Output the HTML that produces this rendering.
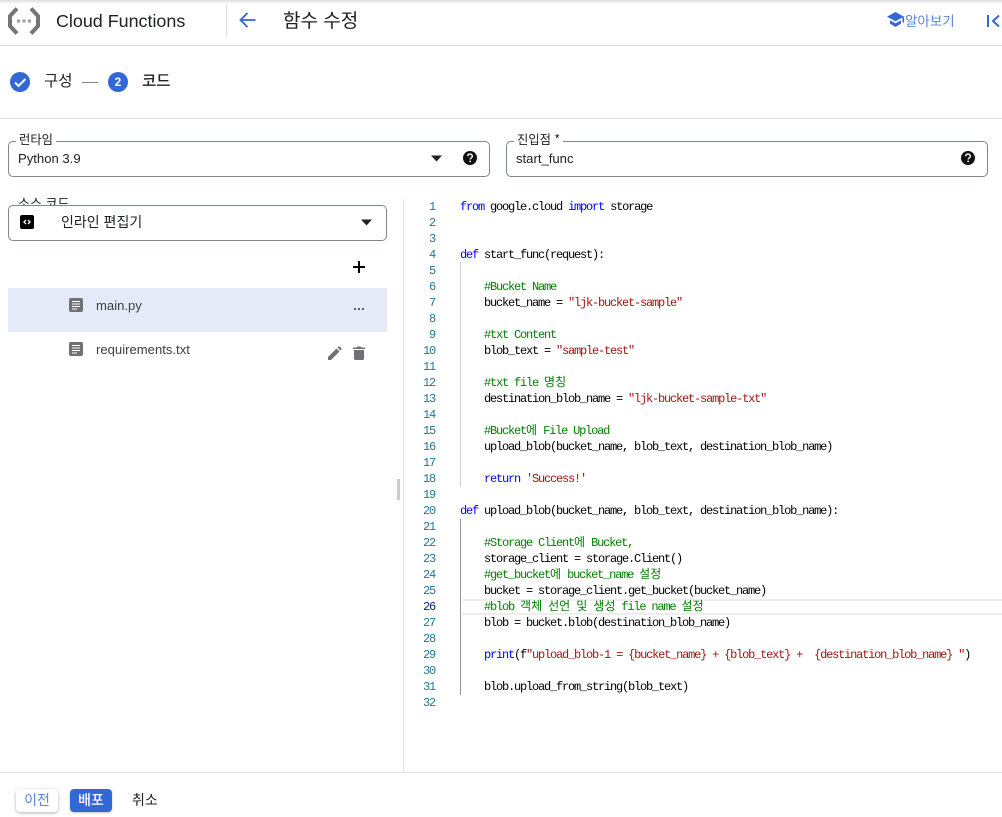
<!DOCTYPE html>
<html lang="ko"><head><meta charset="utf-8"><title>함수 수정</title>
<style>
html,body{margin:0;padding:0;background:#fff}
body{width:1002px;height:817px;position:relative;overflow:hidden;font-family:"Liberation Sans","Noto Sans CJK KR",sans-serif;color:#202124}
.a{position:absolute;white-space:nowrap}
svg{position:absolute;display:block}
.box{position:absolute;box-sizing:border-box;border:1px solid #80868b;border-radius:5px;background:#fff}
.lab{position:absolute;background:#fff;padding:0 3px;font-size:12.300px;line-height:14px;white-space:nowrap;color:#202124}
.val{position:absolute;font-size:13.100px;line-height:16px;white-space:nowrap;color:#202124}
.ko{font-family:"Noto Sans CJK KR","Liberation Sans",sans-serif}
#nums div{position:absolute;left:404px;width:31px;height:16px;line-height:16px;text-align:right;font:12px/16px "Liberation Mono",monospace;letter-spacing:-1.2px;color:#237893}
#code pre{position:absolute;left:460px;margin:0;height:16px;font:12px/16px "Liberation Mono","Noto Sans CJK KR",monospace;letter-spacing:-1.2px;color:#000;white-space:pre}
#code b{font-weight:normal;color:#00f}
#code s{text-decoration:none;color:#a31515}
#code i{font-style:normal;color:#008000}
#code u{text-decoration:none;font-family:"Noto Sans CJK KR",sans-serif;letter-spacing:0;line-height:0}
</style></head><body>

<div class="a" style="left:0;top:0;width:1002px;height:4px;background:linear-gradient(#dcdcdc,#fff)"></div>
<div class="a" style="left:0;top:45px;width:1002px;height:1px;background:#e0e0e0"></div>
<div class="a" style="left:226px;top:5px;width:1px;height:32px;background:#dadce0"></div>

<svg style="left:8px;top:7px" width="32" height="28" viewBox="0 0 32 28"><path d="M9 1.500 2 9v10l7 7.500" fill="none" stroke="#757575" stroke-width="4"/><path d="M23 1.500 30 9v10l-7 7.500" fill="none" stroke="#757575" stroke-width="4"/><circle cx="10.500" cy="14" r="1.700" fill="#9e9e9e"/><circle cx="16" cy="14" r="1.700" fill="#9e9e9e"/><circle cx="21.500" cy="14" r="1.700" fill="#9e9e9e"/></svg>
<div class="a" style="left:56px;top:10px;font-size:17.900px;line-height:22px;color:#202124">Cloud Functions</div>
<svg style="left:238px;top:11px" width="18" height="18" viewBox="0 0 18 18"><path d="M17.500 9H2.500M9.500 2 2.500 9l7 7" fill="none" stroke="#3367d6" stroke-width="1.800"/></svg>
<div class="a ko" style="left:283px;top:7px;font-size:19px;line-height:26px;color:#202124">함수 수정</div>

<svg style="left:887px;top:12px" width="17" height="15" viewBox="0 0 17 15"><path d="M8.500 0 0 4.700l8.500 4.600 7-3.800v5h1.500V4.700zM3 8.400v3.200L8.500 15l5.500-3.400V8.400l-5.500 3z" fill="#3367d6"/></svg>
<div class="a ko" style="left:905px;top:12px;font-size:13.500px;line-height:17px;color:#5a85e0">알아보기</div>
<svg style="left:986px;top:14px" width="16" height="14" viewBox="0 0 16 14"><rect x="1" y="1" width="2" height="12" fill="#3367d6"/><path d="M13 1.500 7 7l6 5.500" fill="none" stroke="#3367d6" stroke-width="2"/></svg>

<svg style="left:10px;top:72px" width="20" height="20" viewBox="0 0 20 20"><circle cx="10" cy="10" r="10" fill="#3367d6"/><path d="M5 10.500 8.500 14 15.500 7" fill="none" stroke="#fff" stroke-width="2"/></svg>
<div class="a ko" style="left:44px;top:71px;font-size:15.500px;line-height:18px;color:#202124">구성</div>
<div class="a" style="left:82px;top:82px;width:16px;height:1px;background:#80868b"></div>
<div class="a" style="left:108px;top:72px;width:20px;height:20px;border-radius:50%;background:#3367d6;color:#fff;font-size:12px;font-weight:bold;line-height:20px;text-align:center">2</div>
<div class="a ko" style="left:142px;top:71px;font-size:15.500px;line-height:18px;font-weight:500;color:#202124">코드</div>
<div class="a" style="left:0;top:118px;width:1002px;height:1px;background:#e0e0e0"></div>

<div class="box" style="left:8px;top:141px;width:482px;height:36px"></div>
<div class="lab ko" style="left:16px;top:132px">런타임</div>
<div class="val" style="left:18px;top:151px">Python 3.9</div>
<svg style="left:431px;top:155px" width="11" height="7" viewBox="0 0 11 7"><path d="M0 .5h11L5.500 6.500z" fill="#202124"/></svg>
<svg style="left:462px;top:150px" width="16" height="16" viewBox="0 0 16 16"><circle cx="8" cy="8" r="7" fill="#111"/><path d="M5.700 6.200C5.800 4.900 6.800 4.100 8 4.100c1.300 0 2.300.8 2.300 2 0 1.700-2.100 1.800-2.100 3.400" fill="none" stroke="#fff" stroke-width="1.400"/><rect x="7.400" y="10.600" width="1.500" height="1.500" fill="#fff"/></svg>

<div class="box" style="left:506px;top:141px;width:482px;height:36px"></div>
<div class="lab ko" style="left:514px;top:132px">진입점 *</div>
<div class="val" style="left:516px;top:151px">start_func</div>
<svg style="left:960px;top:150px" width="16" height="16" viewBox="0 0 16 16"><circle cx="8" cy="8" r="7" fill="#111"/><path d="M5.700 6.200C5.800 4.900 6.800 4.100 8 4.100c1.300 0 2.300.8 2.300 2 0 1.700-2.100 1.800-2.100 3.400" fill="none" stroke="#fff" stroke-width="1.400"/><rect x="7.400" y="10.600" width="1.500" height="1.500" fill="#fff"/></svg>

<div class="box" style="left:8px;top:205px;width:379px;height:36px"></div>
<div class="lab ko" style="left:15px;top:196px;height:9px;overflow:hidden;font-size:13px">소스 코드</div>
<svg style="left:20px;top:215px" width="14" height="14" viewBox="0 0 14 14"><rect width="14" height="14" rx="2" fill="#000"/><path d="M6 5 4 7l2 2M8 5l2 2-2 2" fill="none" stroke="#fff" stroke-width="1.300"/></svg>
<div class="val ko" style="left:61px;top:214px;font-size:14px">인라인 편집기</div>
<svg style="left:361px;top:219px" width="11" height="7" viewBox="0 0 11 7"><path d="M0 .5h11L5.500 6.500z" fill="#202124"/></svg>

<svg style="left:352px;top:260px" width="14" height="14" viewBox="0 0 14 14"><path d="M7 1v12M1 7h12" stroke="#000" stroke-width="2"/></svg>

<div class="a" style="left:8px;top:288px;width:379px;height:44px;background:#e4eaf8"></div>
<svg style="left:69px;top:298px" width="14" height="14" viewBox="0 0 14 14"><rect width="14" height="14" rx="2" fill="#6f7175"/><path d="M3 3.500h8M3 6h8M3 8.500h8M3 11h5" stroke="#fff" stroke-width="1"/></svg>
<div class="val" style="left:96px;top:298px;color:#3c4043">main.py</div>
<div class="a" style="left:354px;top:308px;width:2px;height:2px;background:#5f6368;box-shadow:4px 0 #5f6368,8px 0 #5f6368"></div>

<svg style="left:69px;top:342px" width="14" height="14" viewBox="0 0 14 14"><rect width="14" height="14" rx="2" fill="#6f7175"/><path d="M3 3.500h8M3 6h8M3 8.500h8M3 11h5" stroke="#fff" stroke-width="1"/></svg>
<div class="val" style="left:96px;top:342px;color:#3c4043">requirements.txt</div>
<svg style="left:328px;top:346px" width="14" height="14" viewBox="0 0 14 14"><path d="M0 11v3h3l8.500-8.500-3-3zM9.500 1.500l3 3L14 3 11 0z" fill="#6f7175"/></svg>
<svg style="left:353px;top:346px" width="12" height="14" viewBox="0 0 12 14"><path d="M1 4h10v8.500A1.500 1.500 0 0 1 9.500 14h-7A1.500 1.500 0 0 1 1 12.500zM0 1.500h3.500L4.500.5h3l1 1H12V3H0z" fill="#6f7175"/></svg>

<div class="a" style="left:397px;top:479px;width:3px;height:21px;background:#ccc"></div>
<div class="a" style="left:403px;top:199px;width:1px;height:573px;background:#e3e3e3"></div>

<div class="a" style="left:462px;top:599px;width:540px;height:16px;box-sizing:border-box;border-top:2px solid #eee;border-bottom:2px solid #eee"></div>
<div class="a" style="left:460px;top:262px;width:1px;height:225px;background:#d3d3d3"></div>
<div class="a" style="left:460px;top:519px;width:1px;height:176px;background:#939393"></div>

<div id="nums">
<div style="top:199px">1</div><div style="top:215px">2</div><div style="top:231px">3</div><div style="top:247px">4</div><div style="top:263px">5</div><div style="top:279px">6</div><div style="top:295px">7</div><div style="top:311px">8</div><div style="top:327px">9</div><div style="top:343px">10</div><div style="top:359px">11</div><div style="top:375px">12</div><div style="top:391px">13</div><div style="top:407px">14</div><div style="top:423px">15</div><div style="top:439px">16</div><div style="top:455px">17</div><div style="top:471px">18</div><div style="top:487px">19</div><div style="top:503px">20</div><div style="top:519px">21</div><div style="top:535px">22</div><div style="top:551px">23</div><div style="top:567px">24</div><div style="top:583px">25</div><div style="top:599px;color:#0b216f">26</div><div style="top:615px">27</div><div style="top:631px">28</div><div style="top:647px">29</div><div style="top:663px">30</div><div style="top:679px">31</div><div style="top:695px">32</div>
</div>

<div id="code">
<pre style="top:199px"><b>from</b> google.cloud <b>import</b> storage</pre>
<pre style="top:247px"><b>def</b> start_func(request):</pre>
<pre style="top:279px">    <i>#Bucket Name</i></pre>
<pre style="top:295px">    bucket_name = <s>"ljk-bucket-sample"</s></pre>
<pre style="top:327px">    <i>#txt Content</i></pre>
<pre style="top:343px">    blob_text = <s>"sample-test"</s></pre>
<pre style="top:375px">    <i>#txt file <u>명칭</u></i></pre>
<pre style="top:391px">    destination_blob_name = <s>"ljk-bucket-sample-txt"</s></pre>
<pre style="top:423px">    <i>#Bucket<u>에</u> File Upload</i></pre>
<pre style="top:439px">    upload_blob(bucket_name, blob_text, destination_blob_name)</pre>
<pre style="top:471px">    <b>return</b> <s>'Success!'</s></pre>
<pre style="top:503px"><b>def</b> upload_blob(bucket_name, blob_text, destination_blob_name):</pre>
<pre style="top:535px">    <i>#Storage Client<u>에</u> Bucket,</i></pre>
<pre style="top:551px">    storage_client = storage.Client()</pre>
<pre style="top:567px">    <i>#get_bucket<u>에</u> bucket_name <u>설정</u></i></pre>
<pre style="top:583px">    bucket = storage_client.get_bucket(bucket_name)</pre>
<pre style="top:599px">    <i>#blob <u>객체</u> <u>선언</u> <u>및</u> <u>생성</u> file name <u>설정</u></i></pre>
<pre style="top:615px">    blob = bucket.blob(destination_blob_name)</pre>
<pre style="top:647px">    <b>print</b>(f<s>"upload_blob-1 = {bucket_name} + {blob_text} +  {destination_blob_name} "</s>)</pre>
<pre style="top:679px">    blob.upload_from_string(blob_text)</pre>
</div>

<div class="a" style="left:0;top:772px;width:1002px;height:1px;background:#e0e0e0"></div>
<div class="a ko" style="left:16px;top:789px;width:42px;height:23px;border-radius:4px;background:#fff;box-shadow:0 1px 3px rgba(60,64,67,.4);color:#5a85e0;font-size:14px;line-height:22px;text-align:center">이전</div>
<div class="a ko" style="left:70px;top:789px;width:42px;height:23px;border-radius:4px;background:#3367d6;box-shadow:0 1px 2px rgba(60,64,67,.3);color:#fff;font-size:14px;font-weight:500;line-height:22px;text-align:center">배포</div>
<div class="a ko" style="left:132px;top:789px;font-size:14px;line-height:22px;color:#202124">취소</div>
</body></html>
